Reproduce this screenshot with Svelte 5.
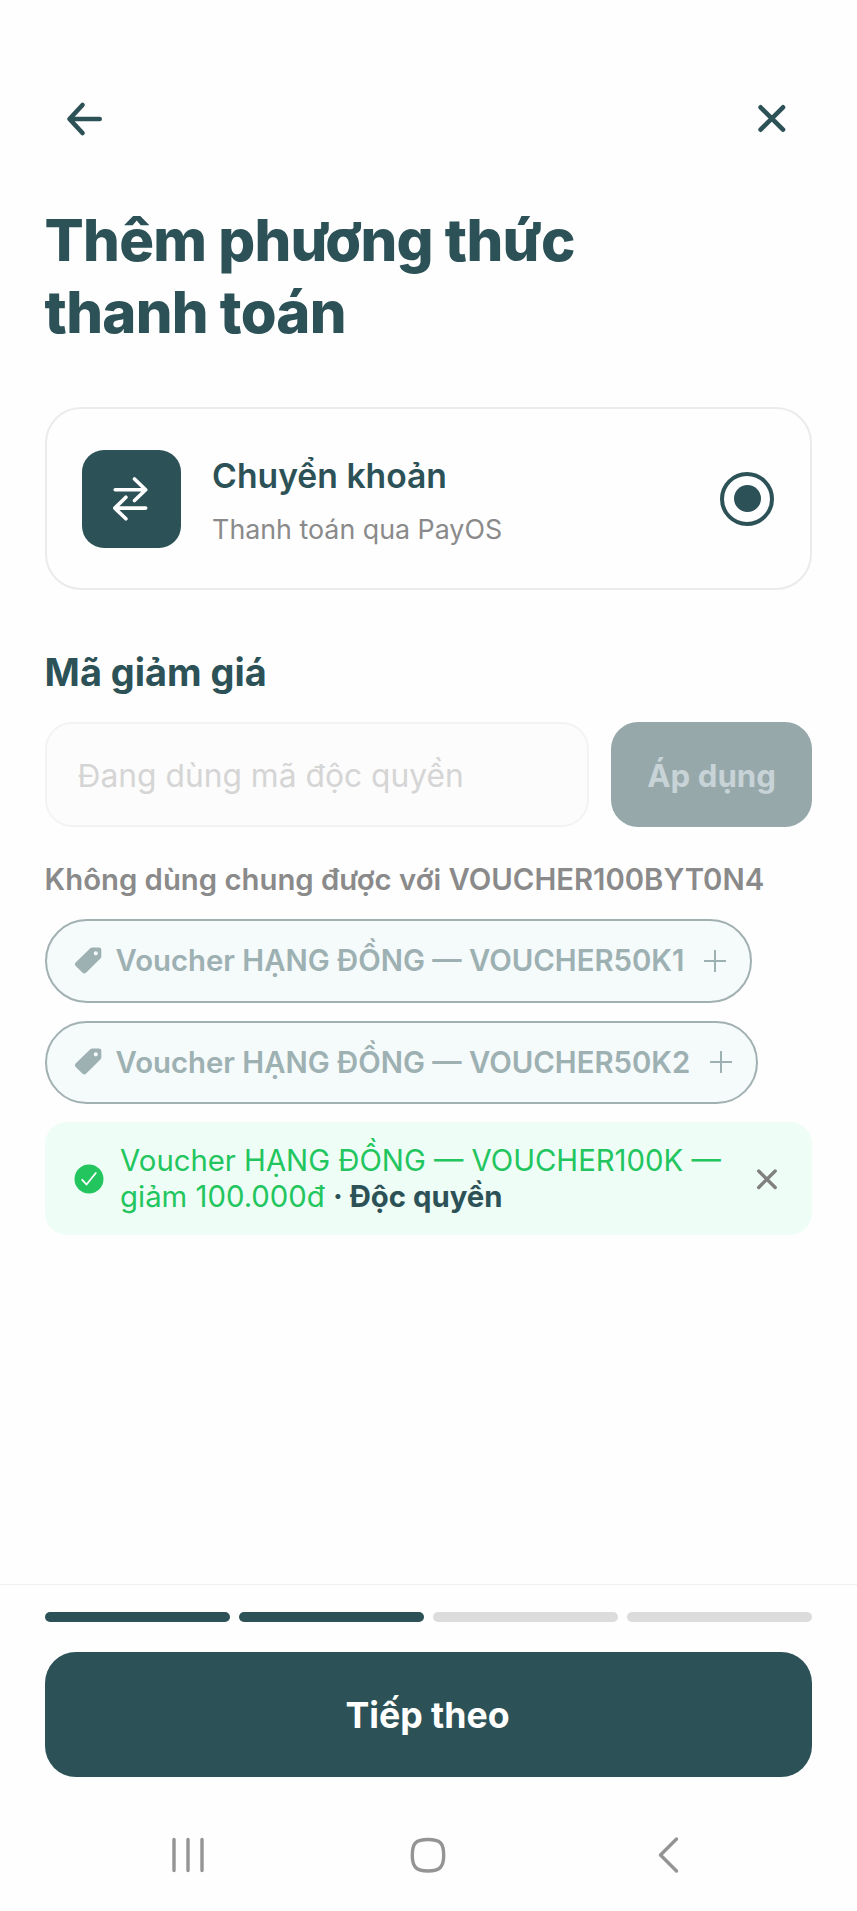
<script>
  const vouchers = ['Voucher HẠNG ĐỒNG — VOUCHER50K1', 'Voucher HẠNG ĐỒNG — VOUCHER50K2'];
  const steps = [true, true, false, false];
</script>

<div class="screen">
  <header>
    <button class="icon-btn" aria-label="Quay lại">
      <svg width="48" height="48" viewBox="0 0 48 48"><path d="M22.5 10 9.500 24l13 14M10 24h29.7" /></svg>
    </button>
    <button class="icon-btn" aria-label="Đóng">
      <svg width="48" height="48" viewBox="0 0 48 48"><path d="M12.6 12.3 35 34.700M35 12.3 12.6 34.700" /></svg>
    </button>
  </header>

  <main>
    <h1>Thêm phương thức<br />thanh toán</h1>

    <div class="method">
      <div class="method-icon">
        <svg width="48" height="48" viewBox="0 0 48 48"><path d="M8.200 14.700h30.500M27.500 4 38.700 14.700 27.500 25.500M38.700 33.100H8.200M18.900 22.200 7.800 33.100 18.900 43.800" /></svg>
      </div>
      <div class="method-text">
        <div class="name">Chuyển khoản</div>
        <div class="desc">Thanh toán qua PayOS</div>
      </div>
      <div class="radio"><span></span></div>
    </div>

    <h2>Mã giảm giá</h2>
    <div class="code-row">
      <div class="field"><span>Đang dùng mã độc quyền</span></div>
      <button class="apply"><span>Áp dụng</span></button>
    </div>
    <p class="note">Không dùng chung được với VOUCHER100BYT0N4</p>

    <div class="pills">
      {#each vouchers as v}
        <div class="pill">
          <svg class="tag" width="28" height="28" viewBox="0 0 28 28"><path fill-rule="evenodd" d="M16.300 1.300Q17.300.5 18.500.5H25Q27.300.5 27.300 2.800V9.300Q27.300 10.600 26.400 11.500L12 25.700Q10.300 27.300 8.600 25.700L1.500 18.700Q0 17 1.600 15.400ZM21.800 4.200a2.100 2.100 0 1 0 0 4.200 2.100 2.100 0 0 0 0-4.200Z" /></svg>
          <span class="pill-text">{v}</span>
          <svg class="plus" width="22" height="22" viewBox="0 0 22 22"><path d="M11 .8v20.400M.8 11h20.400" /></svg>
        </div>
      {/each}
    </div>

    <div class="applied">
      <svg class="check" width="30" height="30" viewBox="0 0 30 30"><circle cx="15" cy="15" r="14.500" /><path d="m8.200 15.800 4.300 4.700 9.300-11.500" /></svg>
      <p>Voucher HẠNG ĐỒNG — VOUCHER100K —<br />giảm 100.000đ{' '}<b>· Độc quyền</b></p>
      <svg class="remove" width="22" height="22" viewBox="0 0 22 22"><path d="m2.700 3 16.500 16.500m0-16.500-16.500 16.500" /></svg>
    </div>
  </main>

  <footer>
    <div class="steps">
      {#each steps as done}<i class:done></i>{/each}
    </div>
    <button class="next">Tiếp theo</button>
  </footer>

  <nav>
    <svg width="40" height="40" viewBox="0 0 40 40"><path d="M6 4.500v31M20 4.500v31M34 4.500v31" /></svg>
    <svg width="40" height="40" viewBox="0 0 40 40"><path d="M19 4.500C31 4.500 34.700 8 34.700 20S31 36 19 36 3.300 32 3.300 20 7 4.500 19 4.500Z" /></svg>
    <svg width="40" height="40" viewBox="0 0 40 40"><path d="M27.500 4 11.500 20 27.500 36" /></svg>
  </nav>
</div>

<style>
  :global(body) { background: #fefefe; }
  .screen {
    width: 857px; height: 1911px; box-sizing: border-box; overflow: hidden;
    display: flex; flex-direction: column;
    font-family: Inter, "Noto Sans", sans-serif; color: #2c5257; background: #fefefe;
  }
  button { border: 0; padding: 0; font: inherit; background: none; }
  h1, h2, p { margin: 0; }
  svg { display: block; flex: none; fill: none; stroke-linecap: round; stroke-linejoin: round; }
  header { height: 204px; box-sizing: border-box; padding: 95px 61px 0 60px; display: flex; justify-content: space-between; align-items: flex-start; }
  .icon-btn svg { stroke: #2c5257; stroke-width: 4.600; }
  main { flex: 1; padding: 0 44.600px; }
  h1 { font-size: 58px; line-height: 72px; font-weight: 800; letter-spacing: -0.750px; white-space: nowrap; }
  .method {
    margin-top: 59px; height: 182.500px; box-sizing: border-box; border: 2px solid #ebebeb; border-radius: 36px;
    padding: 1px 36px 0 35.500px; display: flex; align-items: center;
  }
  .method-icon { width: 98.500px; height: 98.500px; border-radius: 22px; background: #2c5257; display: grid; place-items: center; }
  .method-icon svg { width: 48px; stroke: #fff; stroke-width: 3.600; }
  .method-text { flex: 1; margin-left: 31.500px; }
  .name { font-size: 33.700px; line-height: 42px; font-weight: 600; padding-top: 3px; }
  .desc { font-size: 26.800px; line-height: 34px; margin-top: 15px; color: #8a8a8a; }
  .radio { width: 54px; height: 54px; box-sizing: border-box; border: 4.500px solid #2c5257; border-radius: 50%; display: grid; place-items: center; }
  .radio span { width: 27px; height: 27px; border-radius: 50%; background: #2c5257; }
  h2 { margin-top: 59.500px; font-size: 37.900px; line-height: 46px; font-weight: 700; }
  .code-row { display: flex; gap: 22.300px; margin-top: 27px; height: 104.500px; font-size: 31.250px; }
  .field { flex: 1; box-sizing: border-box; border: 2px solid #f3f3f3; border-radius: 27px; background: #fcfcfc; color: #d5d5d5; padding: 3px 0 0 31px; display: flex; align-items: center; font-size: 31.750px; }
  .apply { width: 201.500px; padding-top: 3px; border-radius: 27px; background: #96a8aa; color: #c7d3d6; font-weight: 700; }
  .note { margin-top: 35px; font-size: 29.300px; line-height: 36px; font-weight: 600; color: #8a8a8a; white-space: nowrap; }
  .pills { margin-top: 21.500px; display: flex; flex-direction: column; align-items: flex-start; gap: 18.200px; }
  .pill { height: 83.500px; box-sizing: border-box; border: 2px solid #a1b0b1; border-radius: 42px; background: #f5fafb; color: #9db0b2; padding: 0 24px 0 27px; display: flex; align-items: center; font-size: 29.300px; font-weight: 600; white-space: nowrap; }
  .pill-text { margin: 0 20px 0 14px; }
  .tag { fill: #9db0b2; }
  .plus { stroke: #9db0b2; stroke-width: 2; }
  .applied { margin-top: 18px; height: 113px; box-sizing: border-box; padding: 0 34px 0 29px; border-radius: 22px; background: #eefdf5; display: flex; align-items: center; }
  .applied p { flex: 1; margin-left: 16.500px; padding-top: 1px; font-size: 29.300px; line-height: 36px; color: #22c55e; white-space: nowrap; }
  .applied b { color: #2c5257; font-weight: 700; }
  .check circle { fill: #22c55e; }
  .check path { stroke: #fff; stroke-width: 1.800; }
  .remove { stroke: #808080; stroke-width: 3.400; }
  footer { height: 194px; flex: none; box-sizing: border-box; border-top: 1px solid #efefef; padding: 27px 44.600px 0; }
  .steps { display: flex; gap: 9px; }
  .steps i { flex: 1; height: 9.500px; border-radius: 5px; background: #dcdcdc; }
  .steps i.done { background: #2c5257; }
  .next { display: block; width: 100%; height: 125px; margin-top: 30.500px; padding-right: 2px; border-radius: 31px; background: #2c5257; color: #fff; font-size: 35.700px; font-weight: 700; }
  nav { height: 133px; box-sizing: border-box; padding: 57px 168px 0; display: flex; justify-content: space-between; align-items: flex-start; }
  nav svg { stroke: #949494; stroke-width: 3.400; }
</style>
